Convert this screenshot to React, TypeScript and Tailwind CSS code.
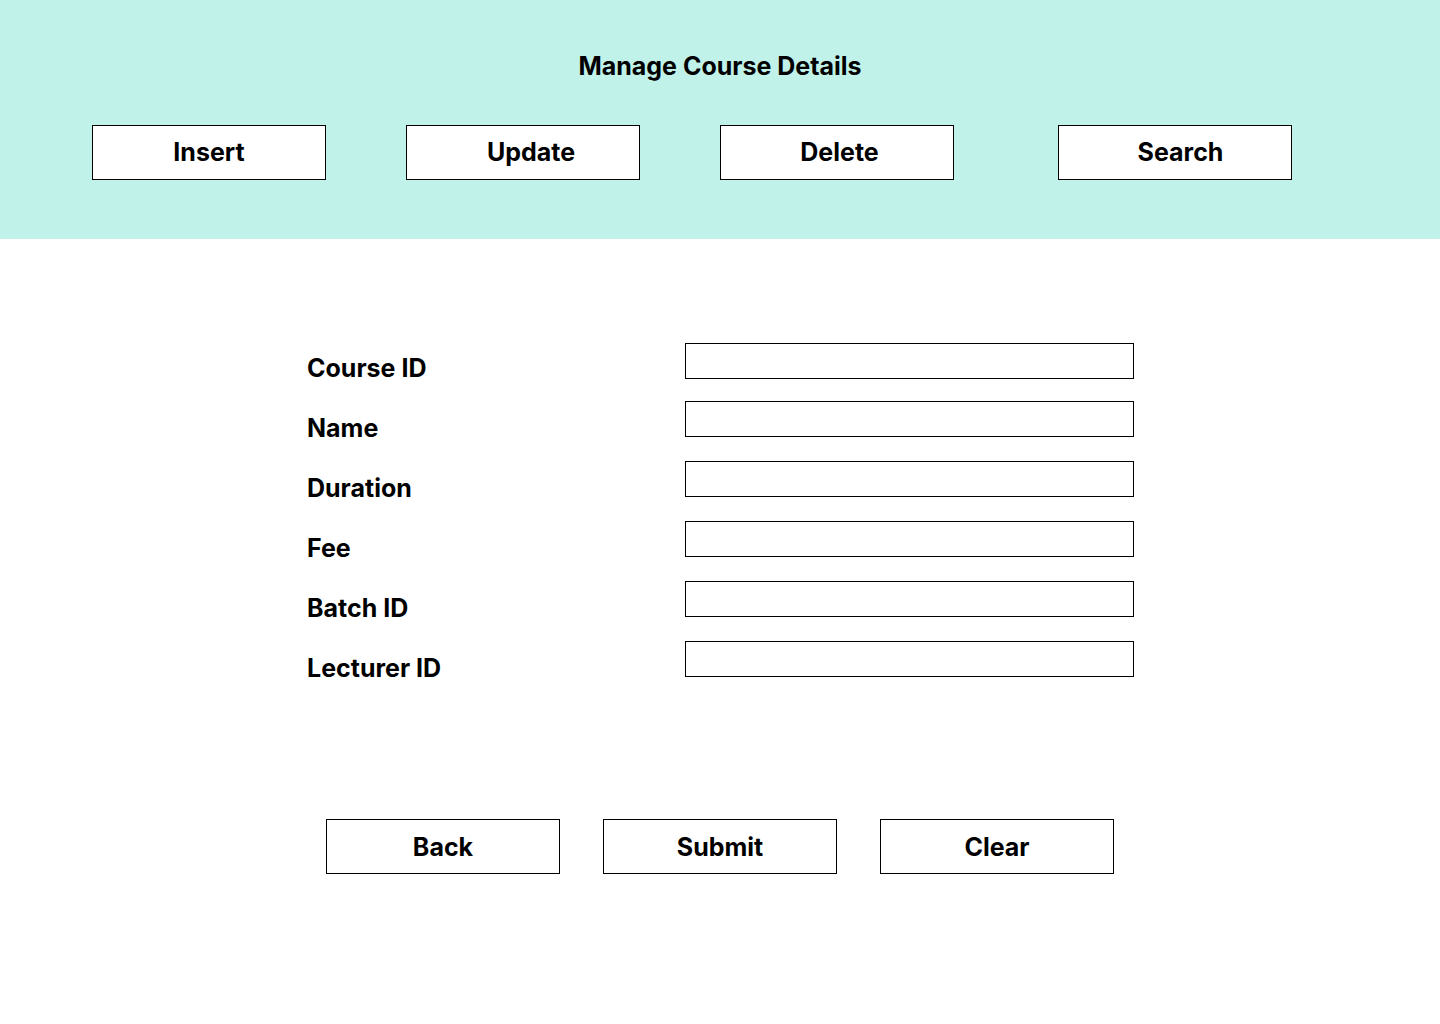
const font = { fontFamily: 'Inter, "Noto Sans", sans-serif' }

const topActions = [
  { label: 'Insert', pad: '' },
  { label: 'Update', pad: 'pl-4' },
  { label: 'Delete', pad: 'pl-[5px]' },
]
const fields = ['Course ID', 'Name', 'Duration', 'Fee', 'Batch ID', 'Lecturer ID']

function BoxButton({ label, className = '' }: { label: string; className?: string }) {
  return (
    <button
      className={`w-[234px] h-[55px] shrink-0 bg-white border border-black text-[25px] leading-none font-bold text-black ${className}`}
    >
      {label}
    </button>
  )
}

export default function App() {
  return (
    <div style={font} className="min-h-[1024px] w-[1440px] bg-white text-black">
      {/* Header */}
      <header className="h-[239px] bg-[#c0f2ea] pt-[50px]">
        <h1 className="text-center text-[25px] leading-8 font-bold">Manage Course Details</h1>
        <div className="flex mt-[43px] pl-[92px] gap-20">
          {topActions.map((a) => (
            <BoxButton key={a.label} label={a.label} className={a.pad} />
          ))}
          <div className="ml-6">
            <BoxButton label="Search" className="pl-[11px]" />
          </div>
        </div>
      </header>

      {/* Form */}
      <section className="flex pl-[307px] pt-[99px]">
        <div className="w-[378px] flex flex-col">
          {fields.map((f) => (
            <span key={f} className="text-[25px] leading-[60px] font-bold">
              {f}
            </span>
          ))}
        </div>
        <div className="flex flex-col pt-[5px]">
          {fields.map((f, i) => (
            <input
              key={f}
              className={`w-[449px] h-9 border border-black bg-white outline-none ${
                i === 0 ? 'mb-[22px]' : 'mb-6'
              }`}
            />
          ))}
        </div>
      </section>

      {/* Actions */}
      <div className="flex justify-center gap-[43px] mt-[118px]">
        <BoxButton label="Back" className="pt-0.5" />
        <BoxButton label="Submit" className="pt-0.5" />
        <BoxButton label="Clear" className="pt-0.5" />
      </div>
    </div>
  )
}
